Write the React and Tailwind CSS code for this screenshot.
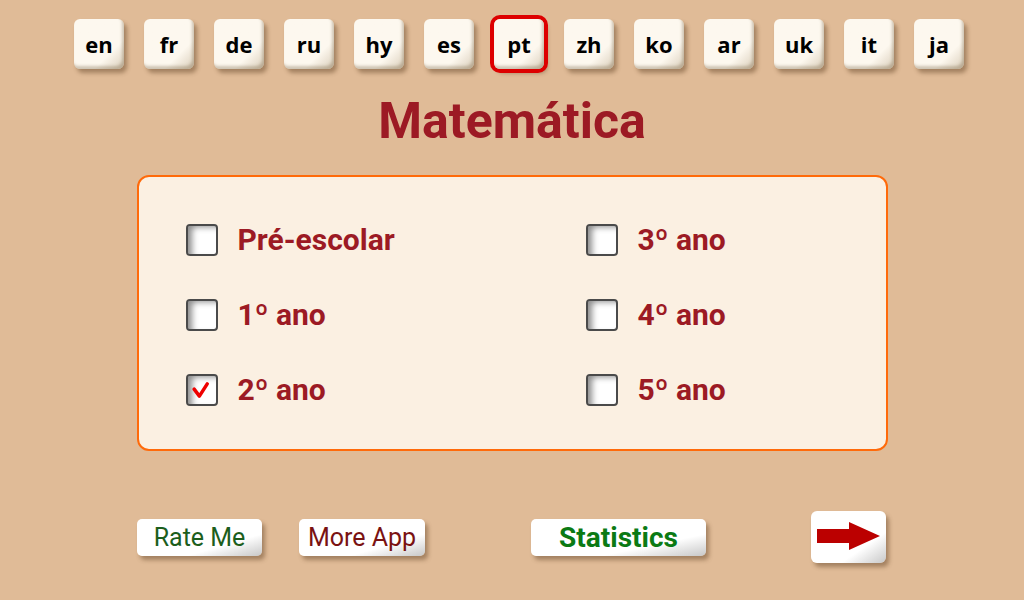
import { useState } from "react";

const LANGS = ["en", "fr", "de", "ru", "hy", "es", "pt", "zh", "ko", "ar", "uk", "it", "ja"];

const GRADES = [
  ["Pré-escolar", "3º ano"],
  ["1º ano", "4º ano"],
  ["2º ano", "5º ano"],
];

function CheckBox({ checked, onClick }) {
  return (
    <button
      onClick={onClick}
      className="relative h-[32px] w-[32px] shrink-0 rounded-[4px] border-2 border-[#4a4a4a] bg-white shadow-[inset_6px_3px_6px_-2px_rgba(0,0,0,0.45)]"
    >
      {checked && (
        <svg viewBox="0 0 32 32" className="absolute left-0 top-0 h-full w-full">
          <path d="M7 15 L13 23 L22 9" fill="none" stroke="#ee0000" strokeWidth="4" strokeLinecap="round" strokeLinejoin="round" />
        </svg>
      )}
    </button>
  );
}

export default function App() {
  const [lang, setLang] = useState("pt");
  const [checked, setChecked] = useState({ "2º ano": true });

  const toggle = (g) => setChecked({ ...checked, [g]: !checked[g] });

  return (
    <div className="flex h-[600px] w-[1024px] flex-col items-center bg-[#e0bb97] font-['Roboto',sans-serif]">
      {/* Idiomas */}
      <div className="mt-[19px] flex gap-5 self-start pl-[74px]">
        {LANGS.map((l) => (
          <button
            key={l}
            onClick={() => setLang(l)}
            className={
              "flex h-[50px] w-[50px] items-center justify-center rounded-[6px] bg-gradient-to-br from-[#fdf8ef] from-70% to-[#d9cdb9] font-['Open_Sans',sans-serif] text-[22px] font-bold text-black shadow-[3px_4px_4px_rgba(90,60,30,0.45),inset_-2px_-3px_3px_rgba(120,100,70,0.35)] " +
              (lang === l ? "ring-4 ring-[#dd0000]" : "")
            }
          >
            {l}
          </button>
        ))}
      </div>

      <h1 className="mt-[20px] text-[50px] font-bold leading-[64px] text-[#9c1a24]">
        Matemática
      </h1>

      {/* Panel */}
      <div className="mt-[22px] h-[276px] w-[751px] rounded-[12px] border-2 border-[#ff6a0a] bg-[#fbf0e2] pl-[47px] pt-[47px]">
        <div className="flex flex-col gap-[43px]">
          {GRADES.map((row) => (
            <div key={row[0]} className="flex">
              {row.map((g) => (
                <div key={g} className="flex w-[400px] shrink-0 items-center">
                  <CheckBox checked={!!checked[g]} onClick={() => toggle(g)} />
                  <span className="ml-[20px] whitespace-nowrap text-[30px] font-bold leading-[32px] text-[#9c1a24]">
                    {g}
                  </span>
                </div>
              ))}
            </div>
          ))}
        </div>
      </div>

      {/* Botones inferiores */}
      <div className="mt-[60px] flex w-[750px] items-center">
        <button className="h-[37px] w-[125px] rounded-[5px] bg-gradient-to-br from-white from-70% to-[#c8c8c8] text-[25px] leading-[37px] text-[#1c5e1c] shadow-[3px_4px_4px_rgba(90,60,30,0.45)]">
          Rate Me
        </button>
        <button className="ml-[37px] h-[37px] w-[126px] rounded-[5px] bg-gradient-to-br from-white from-70% to-[#c8c8c8] text-[25px] leading-[37px] text-[#7a1212] shadow-[3px_4px_4px_rgba(90,60,30,0.45)]">
          More App
        </button>
        <button className="ml-[106px] h-[37px] w-[175px] rounded-[5px] bg-gradient-to-br from-white from-70% to-[#c8c8c8] text-[28px] font-bold leading-[37px] text-[#0b7a14] shadow-[3px_4px_4px_rgba(90,60,30,0.45)]">
          Statistics
        </button>
        <button className="ml-[105px] flex h-[52px] w-[75px] items-center justify-center rounded-[6px] bg-gradient-to-br from-white from-70% to-[#c8c8c8] shadow-[3px_4px_4px_rgba(90,60,30,0.45)]">
          <svg viewBox="0 0 64 30" className="h-[30px] w-[64px]">
            <polygon points="0,7 32,7 32,0 63,14 32,28 32,21 0,21" fill="#bb0000" />
          </svg>
        </button>
      </div>
    </div>
  );
}
